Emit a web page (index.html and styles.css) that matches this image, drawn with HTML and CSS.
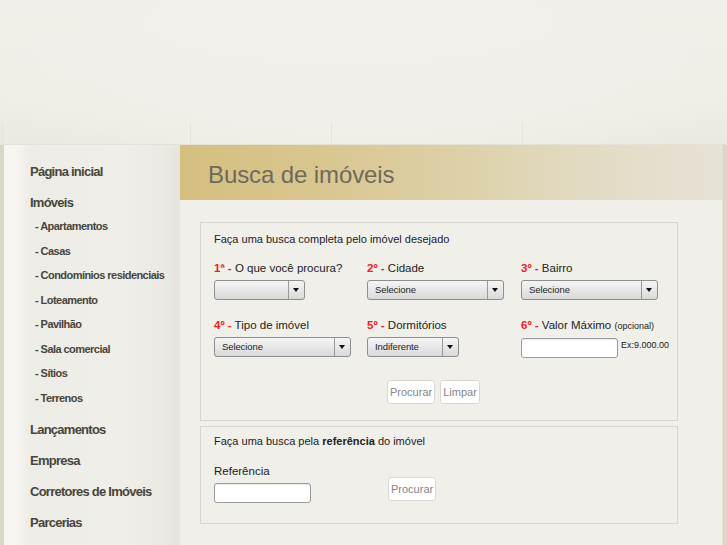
FILE: index.html
```html
<!DOCTYPE html>
<html lang="pt">
<head>
<meta charset="utf-8">
<title>Busca de imóveis</title>
<link rel="stylesheet" href="styles.css">
</head>
<body>
<div class="top">
  <span class="col c1"></span><span class="col c2"></span><span class="col c3"></span><span class="col c4"></span>
</div>
<div class="page">
  <nav class="side">
    <a class="nav-main">Página inicial</a>
    <a class="nav-main">Imóveis</a>
    <div class="sub">
      <a>- Apartamentos</a>
      <a>- Casas</a>
      <a>- Condomínios residenciais</a>
      <a>- Loteamento</a>
      <a>- Pavilhão</a>
      <a>- Sala comercial</a>
      <a>- Sítios</a>
      <a>- Terrenos</a>
    </div>
    <a class="nav-main">Lançamentos</a>
    <a class="nav-main">Empresa</a>
    <a class="nav-main">Corretores de Imóveis</a>
    <a class="nav-main">Parcerias</a>
  </nav>
  <main class="main">
    <div class="head"><h1>Busca de imóveis</h1></div>
    <div class="body">
      <div class="box box1">
        <div class="intro">Faça uma busca completa pelo imóvel desejado</div>
        <div class="grid">
          <div class="field">
            <div class="label"><span class="num">1ª -</span> O que você procura?</div>
            <div class="select w91"><span class="val"></span><span class="arrow"></span></div>
          </div>
          <div class="field">
            <div class="label"><span class="num">2º -</span> Cidade</div>
            <div class="select w137"><span class="val">Selecione</span><span class="arrow"></span></div>
          </div>
          <div class="field">
            <div class="label"><span class="num">3º -</span> Bairro</div>
            <div class="select w137"><span class="val">Selecione</span><span class="arrow"></span></div>
          </div>
          <div class="field">
            <div class="label"><span class="num">4º -</span> Tipo de imóvel</div>
            <div class="select w137"><span class="val">Selecione</span><span class="arrow"></span></div>
          </div>
          <div class="field">
            <div class="label"><span class="num">5º -</span> Dormitórios</div>
            <div class="select w92"><span class="val">Indiferente</span><span class="arrow"></span></div>
          </div>
          <div class="field">
            <div class="label"><span class="num">6º -</span> Valor Máximo <small>(opcional)</small></div>
            <div class="inline"><span class="input w97"></span><span class="ex">Ex:9.000.00</span></div>
          </div>
        </div>
        <div class="buttons">
          <button class="btn">Procurar</button>
          <button class="btn">Limpar</button>
        </div>
      </div>
      <div class="box box2">
        <div class="intro">Faça uma busca pela <b>referência</b> do imóvel</div>
        <div class="refrow">
          <div class="refcell">
            <div class="label">Referência</div>
            <span class="input w97"></span>
          </div>
          <button class="btn btn-ref">Procurar</button>
        </div>
      </div>
    </div>
  </main>
</div>
</body>
</html>
```
FILE: styles.css
```css
html, body {
  margin: 0;
  padding: 0;
}
body {
  background: #dbd7c7;
  font-family: "Liberation Sans", Arial, sans-serif;
  overflow: hidden;
  height: 545px;
}
.top {
  height: 145px;
  position: relative;
  background:
    radial-gradient(ellipse 330px 70px at 350px 20px, #f3f1eb 0%, rgba(243,241,235,0) 100%),
    radial-gradient(ellipse 420px 150px at 364px 40px, #f1efe9 60%, rgba(241,239,233,0) 100%),
    linear-gradient(180deg, #f2f0ea 0%, #efede5 70%, #ece9de 100%);
  border-bottom: 1px solid #e4e1d7;
  box-sizing: border-box;
}
.col {
  position: absolute;
  bottom: 0;
  width: 1px;
  height: 22px;
  background: #e6e3d9;
}
.c1 { left: 2px; }
.c2 { left: 190px; }
.c3 { left: 331px; }
.c4 { left: 522px; }
.page {
  display: flex;
  padding-left: 4px;
  align-items: stretch;
  min-height: 400px;
}
.side {
  width: 176px;
  padding-top: 11px;
  background:
    linear-gradient(90deg, #f6f5f2 0px, #f6f5f2 12px, #eeece6 26px, #f0eee9 120px, #ebe9e3 160px, #e6e4dd 176px);
  display: flex;
  flex-direction: column;
  color: #47453a;
}
.side a {
  display: block;
  font-weight: bold;
  white-space: nowrap;
}
.nav-main {
  padding-left: 26px;
  font-size: 13px;
  line-height: 31px;
  letter-spacing: -0.75px;
}
.sub {
  margin: -4px 0 4px;
}
.sub a {
  padding-left: 31px;
  font-size: 11px;
  line-height: 24.5px;
  letter-spacing: -0.55px;
}
.main {
  width: 542px;
  background: #f0efea;
  border-right: 1px solid #e2dfd6;
}
.head {
  height: 55px;
  padding: 4px 0 0 28px;
  box-sizing: border-box;
  background: linear-gradient(90deg, #d5bf7f 0%, #d9c68f 25%, #ddd0a7 50%, #e2dbc3 75%, #e6e2d6 100%);
}
.head h1 {
  margin: 0;
  font-size: 24px;
  line-height: 51px;
  font-weight: normal;
  color: #6e6a5c;
  letter-spacing: -0.1px;
}
.body {
  padding: 22px 0 30px 20px;
}
.box {
  width: 478px;
  box-sizing: border-box;
  border: 1px solid #d7d5cf;
  padding: 9px 13px 16px;
  color: #222;
}
.box2 {
  margin-top: 5px;
  padding: 7px 13px 20px;
}
.intro {
  font-size: 11px;
  line-height: 14px;
}
.intro b { font-weight: bold; }
.grid {
  display: grid;
  grid-template-columns: 153px 154px auto;
  row-gap: 18px;
  margin-top: 15px;
}
.label {
  font-size: 11.5px;
  line-height: 15px;
  margin-bottom: 4px;
  white-space: nowrap;
}
.label small {
  font-size: 9px;
}
.num {
  color: #ee1c1c;
  font-weight: bold;
}
.select {
  height: 20px;
  box-sizing: border-box;
  border: 1px solid #8e8e8e;
  border-radius: 3px;
  background: linear-gradient(180deg, #f5f5f5 0%, #e6e6e6 55%, #d9d9d9 100%);
  display: flex;
  align-items: stretch;
}
.select .val {
  flex: 1;
  font-size: 9.5px;
  line-height: 18px;
  padding-left: 7px;
  color: #1e1e1e;
  letter-spacing: -0.1px;
}
.select .arrow {
  width: 15px;
  border-left: 1px solid #9a9a9a;
  position: relative;
}
.select .arrow::after {
  content: "";
  position: absolute;
  left: 4px;
  top: 7px;
  border-left: 3.5px solid transparent;
  border-right: 3.5px solid transparent;
  border-top: 4px solid #111;
}
.w91 { width: 91px; }
.w92 { width: 92px; }
.w137 { width: 137px; }
.w97 { width: 97px; }
.inline {
  display: flex;
  align-items: flex-start;
}
.input {
  display: block;
  height: 20px;
  box-sizing: border-box;
  border: 1px solid #9a9a9a;
  border-radius: 3px;
  background: #fff;
  box-shadow: inset 0 1px 1px rgba(0,0,0,0.08);
}
.ex {
  font-size: 9px;
  line-height: 14px;
  margin-left: 3px;
  color: #222;
}
.buttons {
  display: flex;
  gap: 5px;
  margin: 22px 0 0 173px;
}
.btn {
  height: 24px;
  box-sizing: border-box;
  border: 1px solid #d9d7d2;
  border-radius: 3px;
  background: #fff;
  color: #858585;
  font-family: "Liberation Sans", Arial, sans-serif;
  font-size: 11px;
  padding: 0 2px;
  margin: 0;
}
.refrow {
  display: flex;
  align-items: flex-end;
  margin-top: 15.5px;
}
.refcell {
  width: 174px;
}
.refcell .label {
  margin-bottom: 4.5px;
}
.btn-ref {
  margin-bottom: 2px;
}
```
